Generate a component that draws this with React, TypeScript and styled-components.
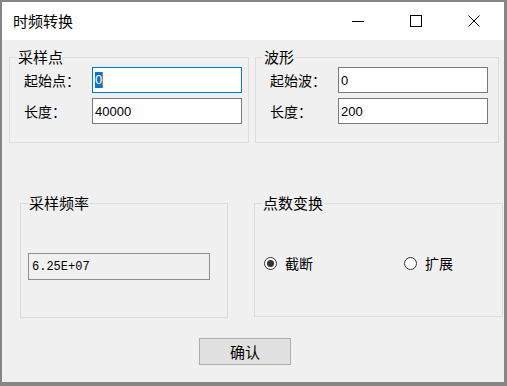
import React from 'react';
import styled, { createGlobalStyle } from 'styled-components';

const GlobalStyle = createGlobalStyle`
  html, body {
    margin: 0;
    padding: 0;
    background: #868686;
  }
  body {
    font-family: "Noto Sans CJK SC", "Noto Sans", sans-serif;
    color: #000;
  }
`;

const Window = styled.div`
  width: 507px;
  height: 386px;
  box-sizing: border-box;
  border-style: solid;
  border-color: #858585;
  border-width: 2px 3px 4px 2px;
  background: #f0f0f0;
  display: flex;
  flex-direction: column;
`;

const TitleBar = styled.div`
  height: 38px;
  flex: none;
  background: #fff;
  display: flex;
  align-items: center;
  padding-left: 11px;
`;

const TitleText = styled.span`
  font-size: 15px;
  line-height: 20px;
`;

const Controls = styled.div`
  margin-left: auto;
  margin-right: 1px;
  display: flex;
  height: 100%;
`;

const ControlButton = styled.div`
  width: 58px;
  height: 100%;
  display: flex;
  align-items: center;
  justify-content: center;
`;

const Content = styled.div`
  flex: 1;
  display: flex;
  flex-direction: column;
  padding-top: 8px;
`;

const Row = styled.div<{ $pad: number; $gap: number; $top?: number }>`
  display: flex;
  align-items: flex-start;
  padding-left: ${p => p.$pad}px;
  gap: ${p => p.$gap}px;
  margin-top: ${p => p.$top ?? 0}px;
`;

const GroupBox = styled.fieldset<{ $w: number; $h: number }>`
  margin: 0;
  padding: 0;
  min-width: 0;
  width: ${p => p.$w}px;
  height: ${p => p.$h}px;
  box-sizing: border-box;
  border: 1px solid #dcdcdc;
`;

const Legend = styled.legend`
  font-size: 15px;
  line-height: 18px;
  padding: 0 1px;
  margin-left: 7px;
`;

const FieldGrid = styled.div`
  display: grid;
  grid-template-columns: 68px 150px;
  row-gap: 5px;
  padding: 1px 0 0 14px;
  align-items: center;
`;

const FieldLabel = styled.span`
  font-size: 14px;
  line-height: 20px;
`;

const TextBox = styled.div<{ $focused?: boolean }>`
  width: 150px;
  height: 26px;
  box-sizing: border-box;
  border: 1px solid ${p => (p.$focused ? '#0078d7' : '#7a7a7a')};
  background: #fff;
  display: flex;
  align-items: center;
  padding-left: 2px;
  font-family: "Liberation Sans", Arial, sans-serif;
  font-size: 13px;
`;

const Selected = styled.span`
  background: #0078d7;
  color: #fff;
  border-right: 1px solid #e86a1c;
  line-height: 16px;
`;

const FreqBody = styled.div`
  padding: 41px 0 0 7px;
`;

const ReadOnlyBox = styled.div`
  width: 182px;
  height: 27px;
  box-sizing: border-box;
  border: 1px solid #8c8c8c;
  background: #f0f0f0;
  display: flex;
  align-items: center;
  padding-left: 3px;
  font-family: "Liberation Mono", "Courier New", monospace;
  font-size: 12px;
`;

const RadioRow = styled.div`
  display: grid;
  grid-template-columns: 140px auto;
  padding: 41px 0 0 9px;
`;

const RadioItem = styled.label`
  display: flex;
  align-items: center;
  gap: 8px;
  font-size: 14px;
  line-height: 20px;
`;

const RadioCircle = styled.span<{ $checked?: boolean }>`
  width: 13px;
  height: 13px;
  box-sizing: border-box;
  border-radius: 50%;
  border: 1px solid #333;
  background: #fff;
  display: flex;
  align-items: center;
  justify-content: center;

  &::after {
    content: '';
    width: 7px;
    height: 7px;
    border-radius: 50%;
    background: ${p => (p.$checked ? '#333' : 'transparent')};
  }
`;

const Button = styled.button`
  margin: 20px 0 0 197px;
  width: 92px;
  height: 27px;
  box-sizing: border-box;
  border: 1px solid #adadad;
  background: #e1e1e1;
  font-family: "Noto Sans CJK SC", sans-serif;
  font-size: 15px;
  padding: 0;
  color: #000;
`;

const App: React.FC = () => {
  return (
    <>
      <GlobalStyle />
      <Window>
        <TitleBar>
          <TitleText>时频转换</TitleText>
          <Controls>
            <ControlButton>
              <svg width="12" height="12" viewBox="0 0 12 12">
                <line x1="0" y1="6.5" x2="12" y2="6.5" stroke="#000" strokeWidth="1" />
              </svg>
            </ControlButton>
            <ControlButton>
              <svg width="12" height="12" viewBox="0 0 12 12">
                <rect x="0.5" y="0.5" width="11" height="11" fill="none" stroke="#000" strokeWidth="1" />
              </svg>
            </ControlButton>
            <ControlButton>
              <svg width="12" height="12" viewBox="0 0 12 12">
                <path d="M0.5 0.5 L11.5 11.5 M11.5 0.5 L0.5 11.5" stroke="#000" strokeWidth="1" />
              </svg>
            </ControlButton>
          </Controls>
        </TitleBar>
        <Content>
          <Row $pad={7} $gap={6}>
            <GroupBox $w={240} $h={95}>
              <Legend>采样点</Legend>
              <FieldGrid>
                <FieldLabel>起始点：</FieldLabel>
                <TextBox $focused>
                  <Selected>0</Selected>
                </TextBox>
                <FieldLabel>长度：</FieldLabel>
                <TextBox>40000</TextBox>
              </FieldGrid>
            </GroupBox>
            <GroupBox $w={244} $h={95}>
              <Legend>波形</Legend>
              <FieldGrid>
                <FieldLabel>起始波：</FieldLabel>
                <TextBox>0</TextBox>
                <FieldLabel>长度：</FieldLabel>
                <TextBox>200</TextBox>
              </FieldGrid>
            </GroupBox>
          </Row>
          <Row $pad={18} $gap={26} $top={51}>
            <GroupBox $w={208} $h={124}>
              <Legend>采样频率</Legend>
              <FreqBody>
                <ReadOnlyBox>6.25E+07</ReadOnlyBox>
              </FreqBody>
            </GroupBox>
            <GroupBox $w={249} $h={123}>
              <Legend>点数变换</Legend>
              <RadioRow>
                <RadioItem>
                  <RadioCircle $checked />
                  截断
                </RadioItem>
                <RadioItem>
                  <RadioCircle />
                  扩展
                </RadioItem>
              </RadioRow>
            </GroupBox>
          </Row>
          <div>
            <Button>确认</Button>
          </div>
        </Content>
      </Window>
    </>
  );
};

export default App;
